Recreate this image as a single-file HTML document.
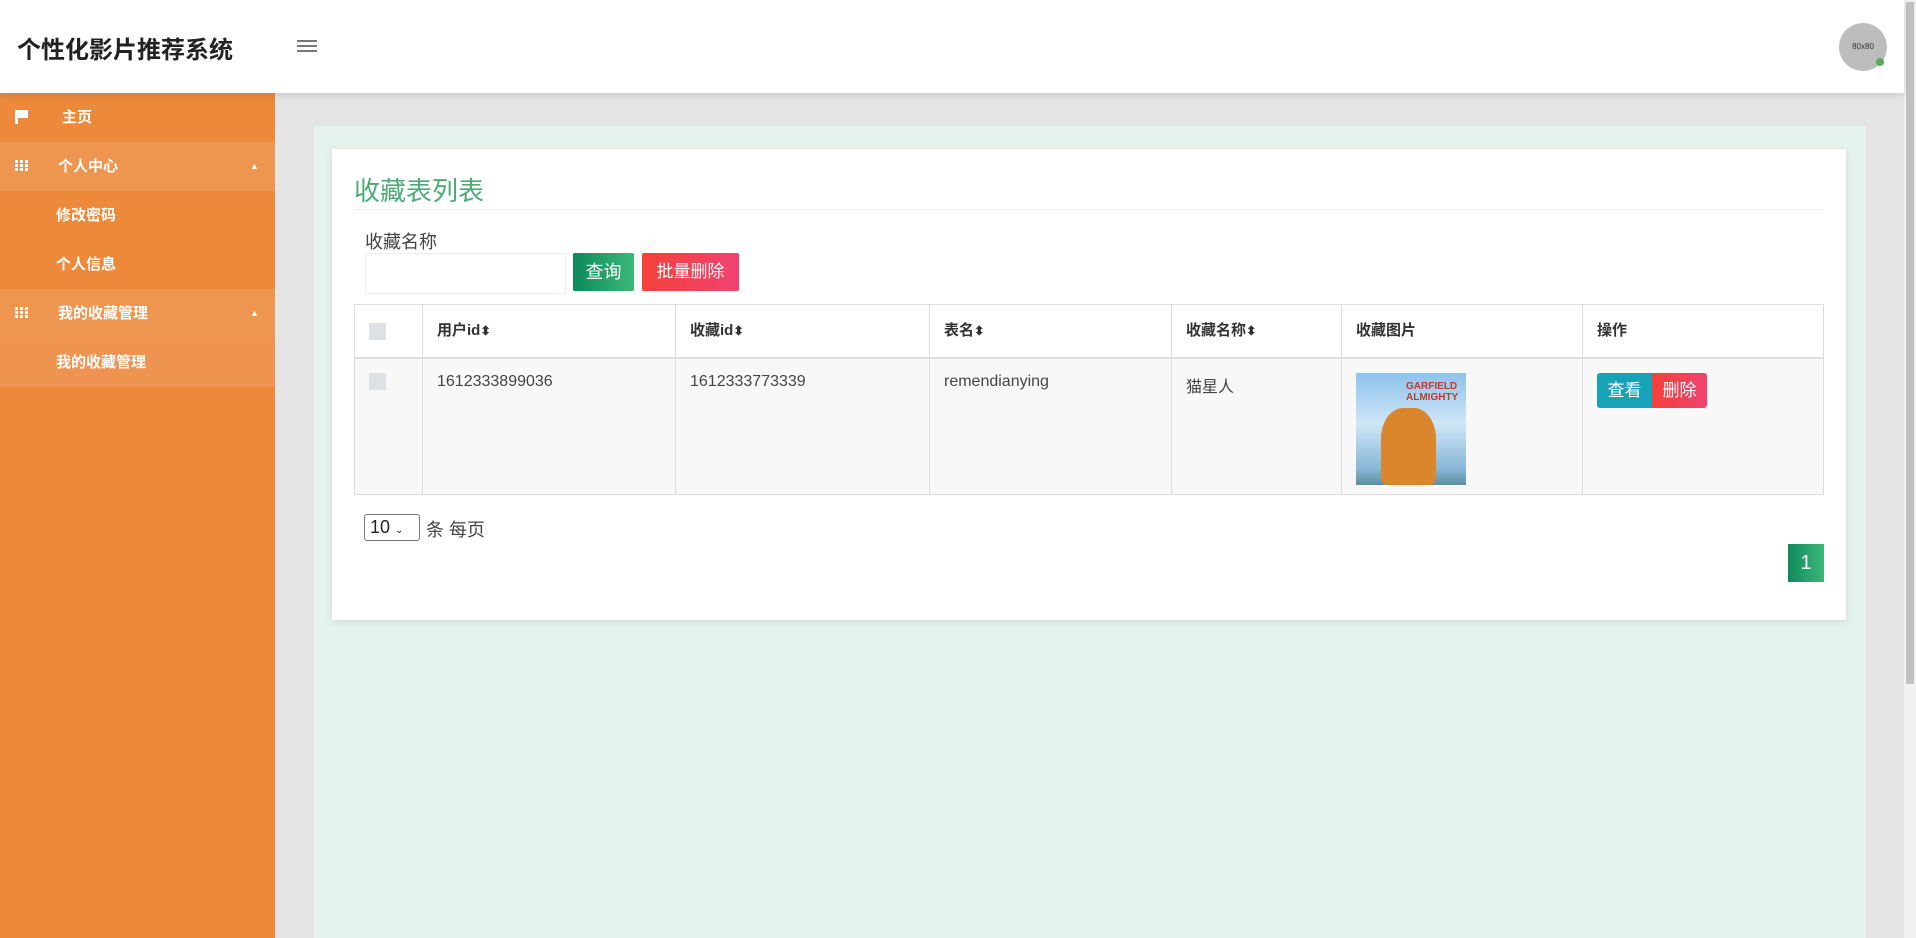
<!DOCTYPE html>
<html><head><meta charset="utf-8"><style>
*{margin:0;padding:0;box-sizing:border-box}
body{width:1916px;height:938px;overflow:hidden;background:#e4e4e4;font-family:"Liberation Sans","Noto Sans CJK SC",sans-serif;position:relative;color:#333}
.abs{position:absolute}
.hdr{left:0;top:0;width:1904px;height:93px;background:#fff;box-shadow:0 2px 6px rgba(0,0,0,.12);z-index:2}
.side{left:0;top:93px;width:275px;height:845px;background:#ec893b}
.item{position:absolute;left:0;width:275px;height:49px;color:#fff;font-size:15px;font-weight:bold;line-height:49px}
.lt{background:#ee964f}
.sb{left:1904px;top:0;width:12px;height:938px;background:#f1f1f1}
.th{position:absolute;top:0;height:52px;line-height:52px;font-weight:bold;font-size:15px;color:#333;border-right:1px solid #ddd;padding-left:14px}
.td{position:absolute;top:0;height:135px;padding:14px 0 0 14px;font-size:16px;color:#444;border-right:1px solid #ddd}
.cb{display:inline-block;width:17px;height:17px;background:#dde0e4;vertical-align:middle}
.grid{position:absolute;left:15px;top:18px;width:13px;height:11px;background:
radial-gradient(circle,#fff 0,#fff 0) 0 0/3px 3px no-repeat;}
.g{position:absolute;width:3px;height:3px;background:#fff}
</style></head><body>
<div class="abs hdr">
 <div class="abs" style="left:17px;top:30px;font-size:24px;font-weight:bold;color:#222">个性化影片推荐系统</div>
 <div class="abs" style="left:297px;top:40px;width:20px;height:2px;background:#777;box-shadow:0 5px 0 #777,0 10px 0 #777"></div>
 <div class="abs" style="left:1839px;top:23px;width:48px;height:48px;border-radius:50%;background:#bdbdbd;font-size:8px;color:#333;text-align:center;line-height:48px">80x80</div>
 <div class="abs" style="left:1876px;top:58px;width:8px;height:8px;border-radius:50%;background:#5aa95c"></div>
</div>
<div class="abs sb"><div class="abs" style="left:2px;top:2px;width:8px;height:682px;background:#c1c1c1"></div></div>
<div class="abs side">
 <div class="item" style="top:0"><span class="abs" style="left:15px;top:17px;width:3px;height:14px;background:#fff"></span><span class="abs" style="left:18px;top:17px;width:10px;height:8px;background:#fff"></span><span style="margin-left:62px">主页</span></div>
 <div class="item lt" style="top:49px"><span class="abs" style="left:15px;top:18px;width:14px;height:11px;background:repeating-linear-gradient(90deg,#fff 0 3px,transparent 3px 5px),#0000;-webkit-mask:repeating-linear-gradient(0deg,#000 0 3px,transparent 3px 4px)"></span><span style="margin-left:58px">个人中心</span><span class="abs" style="left:250px;font-size:9px">▲</span></div>
 <div class="item" style="top:98px"><span style="margin-left:56px">修改密码</span></div>
 <div class="item" style="top:147px"><span style="margin-left:56px">个人信息</span></div>
 <div class="item lt" style="top:196px"><span class="abs" style="left:15px;top:18px;width:14px;height:11px;background:repeating-linear-gradient(90deg,#fff 0 3px,transparent 3px 5px);-webkit-mask:repeating-linear-gradient(0deg,#000 0 3px,transparent 3px 4px)"></span><span style="margin-left:58px">我的收藏管理</span><span class="abs" style="left:250px;font-size:9px">▲</span></div>
 <div class="item lt" style="top:245px;background:#ee9450"><span style="margin-left:56px">我的收藏管理</span></div>
</div>
<div class="abs" style="left:314px;top:126px;width:1552px;height:812px;background:#e6f2ec"></div>
<div class="abs" style="left:332px;top:149px;width:1514px;height:471px;background:#fff;box-shadow:0 2px 8px rgba(0,0,0,.1)">
 <div class="abs" style="left:22px;top:22px;font-size:26px;color:#4daa76">收藏表列表</div>
 <div class="abs" style="left:22px;top:60px;width:1470px;height:1px;background:#eee"></div>
 <div class="abs" style="left:33px;top:79px;font-size:18px;color:#444">收藏名称</div>
 <div class="abs" style="left:33px;top:104px;width:201px;height:41px;border:1px solid #eee;background:#fff"></div>
 <div class="abs" style="left:241px;top:104px;width:61px;height:38px;border-radius:2px;background:linear-gradient(90deg,#0c8a5c,#3cb878);color:#fff;font-size:18px;text-align:center;line-height:38px">查询</div>
 <div class="abs" style="left:310px;top:104px;width:97px;height:38px;border-radius:2px;background:linear-gradient(90deg,#f5403a,#ef4470);color:#fff;font-size:17px;text-align:center;line-height:38px">批量删除</div>
 <div class="abs" style="left:22px;top:155px;width:1470px;height:191px;border:1px solid #ddd;overflow:hidden">
  <div class="abs" style="left:0;top:0;width:1468px;height:54px;border-bottom:2px solid #ddd">
   <div class="th" style="left:0;width:68px"><span class="cb"></span></div>
   <div class="th" style="left:68px;width:253px">用户id<small>⬍</small></div>
   <div class="th" style="left:321px;width:254px">收藏id<small>⬍</small></div>
   <div class="th" style="left:575px;width:242px">表名<small>⬍</small></div>
   <div class="th" style="left:817px;width:170px">收藏名称<small>⬍</small></div>
   <div class="th" style="left:987px;width:241px">收藏图片</div>
   <div class="th" style="left:1228px;width:240px;border:0">操作</div>
  </div>
  <div class="abs" style="left:0;top:54px;width:1468px;height:135px;background:#f8f8f8">
   <div class="td" style="left:0;width:68px"><span class="cb"></span></div>
   <div class="td" style="left:68px;width:253px">1612333899036</div>
   <div class="td" style="left:321px;width:254px">1612333773339</div>
   <div class="td" style="left:575px;width:242px">remendianying</div>
   <div class="td" style="left:817px;width:170px">猫星人</div>
   <div class="td" style="left:987px;width:241px"><div style="width:110px;height:112px;background:linear-gradient(180deg,#8ec3ec 0%,#cfe6f7 45%,#8ab8d8 85%,#5e8fa0 100%);position:relative;overflow:hidden"><div class="abs" style="left:25px;top:35px;width:55px;height:77px;border-radius:40% 40% 10% 10%;background:#d9862c"></div><div class="abs" style="left:50px;top:8px;font-size:10px;font-weight:bold;color:#c0392b;line-height:11px">GARFIELD<br>ALMIGHTY</div></div></div>
   <div class="td" style="left:1228px;width:240px;border:0"><span style="display:inline-block;width:55px;height:35px;background:#17a2b8;color:#fff;border-radius:3px 0 0 3px;text-align:center;line-height:35px;font-size:17px">查看</span><span style="display:inline-block;width:55px;height:35px;background:linear-gradient(90deg,#f5403a,#ef4470);color:#fff;border-radius:0 3px 3px 0;text-align:center;line-height:35px;font-size:17px">删除</span></div>
  </div>
 </div>
 <div class="abs" style="left:32px;top:365px;width:56px;height:27px;border:1px solid #777;border-radius:3px;font-size:18px;line-height:25px;padding-left:5px;color:#222">10 <span style="font-size:10px">⌄</span></div>
 <div class="abs" style="left:94px;top:367px;font-size:18px;color:#444">条 每页</div>
 <div class="abs" style="left:1456px;top:395px;width:36px;height:38px;background:linear-gradient(90deg,#0f8a5e,#3cb878);color:#fff;font-size:20px;text-align:center;line-height:38px">1</div>
</div>
</body></html>
